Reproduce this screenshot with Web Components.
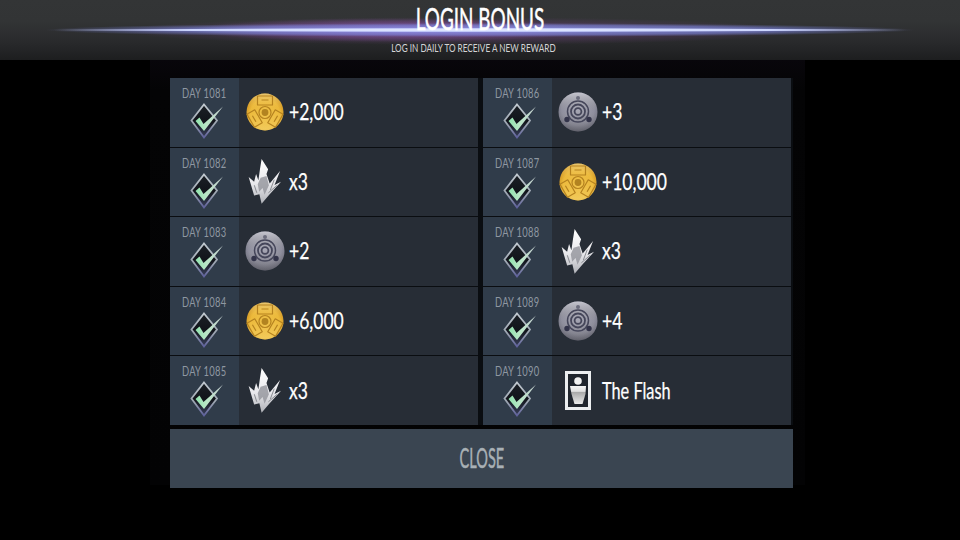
<!DOCTYPE html>
<html><head><meta charset="utf-8">
<style>
html,body{margin:0;padding:0;background:#000;width:960px;height:540px;overflow:hidden;font-family:Lato,"Liberation Sans",sans-serif}
body{display:flex;flex-direction:column}
</style></head><body>
<bonus-header title-text="LOGIN BONUS" sub="LOG IN DAILY TO RECEIVE A NEW REWARD"></bonus-header>
<bonus-panel>
  <day-row day="1081" kind="coin" value="+2,000"></day-row>
  <day-row day="1086" kind="cell" value="+3"></day-row>
  <day-row day="1082" kind="shard" value="x3"></day-row>
  <day-row day="1087" kind="coin" value="+10,000"></day-row>
  <day-row day="1083" kind="cell" value="+2"></day-row>
  <day-row day="1088" kind="shard" value="x3"></day-row>
  <day-row day="1084" kind="coin" value="+6,000"></day-row>
  <day-row day="1089" kind="cell" value="+4"></day-row>
  <day-row day="1085" kind="shard" value="x3"></day-row>
  <day-row day="1090" kind="hero" value="The Flash"></day-row>
</bonus-panel>
<script>
class BonusHeader extends HTMLElement{
  connectedCallback(){
    const r=this.attachShadow({mode:'open'});
    r.innerHTML=`<style>
    :host{display:flex;flex-direction:column;align-items:center;height:60px;flex:none;color:#fff;
      background:
       radial-gradient(ellipse 440px 2px at 50% 30px,#e8eeff 0,#cdd6ff 70%,rgba(170,180,250,0) 100%),
       radial-gradient(ellipse 435px 7px at 50% 30px,rgba(150,160,245,.85) 0,rgba(125,135,225,.6) 70%,rgba(110,110,200,0) 100%),
       radial-gradient(ellipse 200px 12px at 41% 30px,rgba(160,100,200,.6) 0,rgba(140,85,170,.35) 65%,rgba(120,70,140,0) 100%),
       radial-gradient(ellipse 340px 14px at 48% 31px,rgba(125,75,150,.55) 0,rgba(110,65,125,.35) 60%,rgba(90,60,100,0) 100%),
       linear-gradient(#333536 0,#323435 35%,#2c2d2f 60%,#252628 80%,#1d1e1f 100%);}
    h1{margin:3px 0 0;font:400 30px/30px Lato,"Liberation Sans",sans-serif;transform:scaleX(.63);white-space:nowrap;-webkit-text-stroke:.5px #fff}
    p{margin:9px 14px 0 0;font:400 10.5px/12px Lato,"Liberation Sans",sans-serif;color:#d3d3d5;transform:scaleX(.78);white-space:nowrap}
    </style><h1>${this.getAttribute('title-text')}</h1><p>${this.getAttribute('sub')}</p>`;
  }
}
class BonusPanel extends HTMLElement{
  connectedCallback(){
    const r=this.attachShadow({mode:'open'});
    r.innerHTML=`<style>
    :host{display:block;box-sizing:border-box;width:655px;height:425px;margin-left:150px;padding:18px 12px 0 20px;
      background:linear-gradient(#08060b 0,#040405 30px,#030304 100%)}
    .grid{display:grid;grid-template-columns:308px 308px;column-gap:5px;row-gap:1px;grid-template-rows:repeat(5,1fr);height:347px;background:#0a0d11}
    button{display:flex;align-items:center;justify-content:center;box-sizing:border-box;width:623px;height:59px;margin:4px 0 0;border:0;padding:0 0 2px;background:#3a4551;color:#a9b1b6}
    span{display:block;font:400 26px/30px Lato,"Liberation Sans",sans-serif;transform:scaleX(.56);-webkit-text-stroke:.45px #a9b1b6}
    </style><div class="grid"><slot></slot></div><button><span>CLOSE</span></button>`;
  }
}
const blade=`<path d="M-7.500-16.500h15v9h-15zM-3.500-12.500h7"/>`;
const ICONS={
coin:`<svg width="38" height="38" viewBox="0 0 38 38">
 <defs><radialGradient id="g" cx=".5" cy=".55" r=".55"><stop offset="0" stop-color="#eec14a"/><stop offset=".72" stop-color="#ecb93a"/><stop offset="1" stop-color="#cc901f"/></radialGradient>
 <linearGradient id="g2" x1="0" y1="0" x2="0" y2="1"><stop offset="0" stop-color="#f2dc96" stop-opacity=".7"/><stop offset=".4" stop-color="#f0c04a" stop-opacity="0"/><stop offset="1" stop-color="#f8dc7c" stop-opacity=".55"/></linearGradient></defs>
 <circle cx="19" cy="19" r="18.500" fill="url(#g)"/><circle cx="19" cy="19" r="18.500" fill="url(#g2)"/>
 <g transform="translate(19 19.500)" fill="none" stroke="#b5821f" stroke-width="1.200" stroke-linejoin="round">
  ${blade}<g transform="rotate(120)">${blade}</g><g transform="rotate(240)">${blade}</g>
  <circle r="6"/>
 </g>
 <circle cx="19" cy="19.500" r="3.400" fill="#b28320"/>
</svg>`,
cell:`<svg width="40" height="40" viewBox="0 0 40 40">
 <defs><radialGradient id="s" cx=".5" cy=".42" r=".6"><stop offset="0" stop-color="#a9a9b6"/><stop offset=".7" stop-color="#8f8f9e"/><stop offset="1" stop-color="#6c6c7c"/></radialGradient>
 <linearGradient id="s2" x1="0" y1="0" x2="0" y2="1"><stop offset="0" stop-color="#d8d8e0" stop-opacity=".75"/><stop offset=".45" stop-color="#999" stop-opacity="0"/><stop offset="1" stop-color="#444" stop-opacity=".35"/></linearGradient></defs>
 <circle cx="20" cy="20" r="19.500" fill="url(#s)"/><circle cx="20" cy="20" r="19.500" fill="url(#s2)"/>
 <g fill="none" stroke="#45465a">
  <circle cx="20" cy="19.500" r="10.500" stroke-width="1.500"/>
  <circle cx="20" cy="19.500" r="7" stroke-width="1.800"/>
  <circle cx="20" cy="19.500" r="3.400" stroke-width="1.800"/>
 </g>
 <circle cx="20" cy="6" r="2" fill="#6b6c7d"/>
 <circle cx="9" cy="27.500" r="2.700" fill="#33344a"/><circle cx="31" cy="27.500" r="2.700" fill="#33344a"/>
</svg>`,
shard:`<svg width="35" height="45" viewBox="0 0 36 48" preserveAspectRatio="none">
 <defs><linearGradient id="w" x1="0" y1="0" x2="0" y2="1"><stop offset="0" stop-color="#fff"/><stop offset=".55" stop-color="#e8e8ec"/><stop offset="1" stop-color="#b0b2b8"/></linearGradient></defs>
 <path fill="url(#w)" d="M14 0 20.700 11 19 16 22.300 26 33 12.700 27.300 27.700 34 24.300 22.300 37.700 14 47.700 11.700 37.700 6.300 39 4 31 .7 19.300 6.300 24.300 8.300 16 10.700 22.700 12.300 11z"/>
 <path fill="#92949b" opacity=".8" d="M13 20 19 18 21.500 28 17 38 15 31 11.500 35 10 27z"/>
 <path fill="none" stroke="#6f7178" stroke-width=".8" d="M6.500 28 9 36M27 22 23 33M30 28 21 36"/>
</svg>`,
hero:`<svg width="26" height="39" viewBox="0 0 26 39">
 <defs><linearGradient id="b" x1="0" y1="0" x2="0" y2="1"><stop offset="0" stop-color="#f6f6f6"/><stop offset=".3" stop-color="#e0e0e0"/><stop offset=".34" stop-color="#a8a8a8"/><stop offset="1" stop-color="#eaeaea"/></linearGradient></defs>
 <rect x="1.500" y="1.500" width="23" height="36" fill="#20252d" stroke="#eceef0" stroke-width="3"/>
 <circle cx="13" cy="10" r="3.800" fill="#f2f2f2"/>
 <path fill="url(#b)" d="M5 15h16l-.5 8-3 10h-8l-3-10z"/>
</svg>`
};
class RewardIcon extends HTMLElement{
  connectedCallback(){
    const r=this.attachShadow({mode:'open'});
    r.innerHTML=`<style>:host{display:flex;align-items:center;justify-content:center;width:40px;height:48px}svg{display:block}</style>${ICONS[this.getAttribute('kind')]}`;
  }
}
class CheckMark extends HTMLElement{
  connectedCallback(){
    const r=this.attachShadow({mode:'open'});
    r.innerHTML=`<style>:host{display:block;width:34px;height:36px}svg{display:block}</style>
    <svg width="34" height="36" viewBox="0 0 34 36">
    <defs><linearGradient id="d" x1="0" y1="0" x2="0" y2="1"><stop offset="0" stop-color="#1b2026"/><stop offset=".5" stop-color="#11141a"/><stop offset="1" stop-color="#39405c"/></linearGradient>
    <linearGradient id="c" x1="0" y1="0" x2="1" y2="0"><stop offset="0" stop-color="#8fe3ad"/><stop offset=".4" stop-color="#b9e7c6"/><stop offset="1" stop-color="#c8d0d3"/></linearGradient>
    <linearGradient id="e" x1="0" y1="0" x2="0" y2="1"><stop offset="0" stop-color="#c0c8cf"/><stop offset=".6" stop-color="#9ba4b0"/><stop offset="1" stop-color="#5d5f9a"/></linearGradient></defs>
    <path d="M14 1.500 27 17.500 14 34.500 1.500 17.500z" fill="url(#d)" stroke="url(#e)" stroke-width="1.800"/>
    <path d="M5.500 18 9.500 14.500 13.500 21 33 3.500 14 28z" fill="url(#c)"/>
    </svg>`;
  }
}
class DayRow extends HTMLElement{
  connectedCallback(){
    const r=this.attachShadow({mode:'open'});
    const sx=this.getAttribute('kind')==='hero'?.68:.73;
    r.innerHTML=`<style>
    :host{display:grid;grid-template-columns:69px 1fr;min-height:0;background:#272d36}
    .d{display:flex;flex-direction:column;align-items:center;background:#303c4a;padding-top:7px;box-sizing:border-box;overflow:hidden}
    .d span{display:block;white-space:nowrap;font:400 14px/15px Lato,"Liberation Sans",sans-serif;color:#8f98a2;letter-spacing:.4px;transform:scaleX(.67)}
    check-mark{margin-top:3px;margin-left:5px;flex:none}
    .v{display:flex;align-items:center;gap:4px;padding-left:6px}
    .v span{display:block;white-space:nowrap;color:#fff;margin-top:-2px;font:400 24px/30px Lato,"Liberation Sans",sans-serif;transform:scaleX(${sx});transform-origin:left center;-webkit-text-stroke:.25px #fff}
    </style>
    <div class="d"><span>DAY ${this.getAttribute('day')}</span><check-mark></check-mark></div>
    <div class="v"><reward-icon kind="${this.getAttribute('kind')}"></reward-icon><span>${this.getAttribute('value')}</span></div>`;
  }
}
customElements.define('bonus-header',BonusHeader);
customElements.define('bonus-panel',BonusPanel);
customElements.define('reward-icon',RewardIcon);
customElements.define('check-mark',CheckMark);
customElements.define('day-row',DayRow);
</script>
</body></html>
